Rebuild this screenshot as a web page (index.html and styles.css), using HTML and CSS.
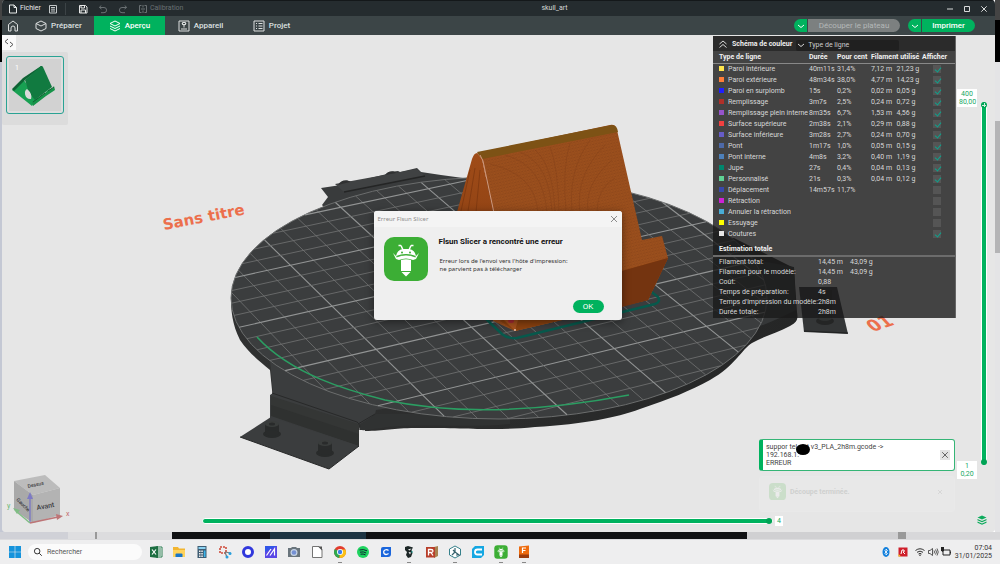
FILE: index.html
```html
<!DOCTYPE html>
<html lang="fr">
<head>
<meta charset="utf-8">
<title>skull_art</title>
<link rel="stylesheet" href="styles.css">
</head>
<body>
<div class="desktop">
<main class="window">
  <header class="titlebar">
    <button class="tool file"><svg class="ic" viewBox="0 0 10 10"><path d="M1.500 1h4.500l2.500 2.500v5.500h-7zM6 1v2.500h2.500"/></svg>Fichier</button>
    <button class="tool" aria-label="Menu"><svg class="ic" viewBox="0 0 10 10"><path d="M1.500 1.500h7v7.500h-7zM3 3.500h4M3 5.200h4M3 7h4"/></svg></button>
    <span class="sep"></span>
    <button class="tool save" aria-label="Enregistrer"><svg class="ic bright" viewBox="0 0 10 10"><path d="M1.500 1.500h6l1.500 1.500v6h-7.500zM3 1.500v2.500h3.500v-2.500M3 9v-3h4.500v3"/></svg></button>
    <button class="tool dim" aria-label="Annuler"><svg class="ic" viewBox="0 0 10 10"><path d="M3 1.500L1.500 3.500 3.500 5M1.500 3.500h4.500a2.600 2.600 0 0 1 0 5.200h-3"/></svg></button>
    <button class="tool dim" aria-label="Rétablir"><svg class="ic" viewBox="0 0 10 10"><path d="M7 1.500L8.500 3.500 6.500 5M8.500 3.500h-4.500a2.600 2.600 0 0 0 0 5.200h3"/></svg></button>
    <button class="tool dim"><svg class="ic" viewBox="0 0 10 10"><path d="M3.500 1.500h-2v7h2M6.500 1.500h2v7h-2M5 1v2.500M5 6.500v2.500M3 5h4"/></svg>Calibration</button>
    <h1 class="doc">skull_art</h1>
    <div class="wincontrols">
      <button aria-label="Réduire"><svg class="ic" viewBox="0 0 10 10"><path d="M2 5h6"/></svg></button>
      <button aria-label="Agrandir"><svg class="ic" viewBox="0 0 10 10"><path d="M2.500 2.500h5v5h-5z"/></svg></button>
      <button aria-label="Fermer"><svg class="ic" viewBox="0 0 10 10"><path d="M2.300 2.300l5.400 5.400M7.700 2.300l-5.400 5.400"/></svg></button>
    </div>
  </header>
  <nav class="tabs">
    <button class="home" aria-label="Accueil"><svg class="ic big" viewBox="0 0 12 12"><path d="M1.500 6v-1.500L6 1l4.500 3.500V11H8V8a2 2 0 0 0-4 0v3H1.500V6"/></svg></button>
    <button class="tab"><svg class="ic big" viewBox="0 0 12 12"><path d="M6 1l5 2.500v5L6 11 1 8.500v-5zM1 3.500L6 6l5-2.500"/></svg>Préparer</button>
    <button class="tab active"><svg class="ic big" viewBox="0 0 12 12"><path d="M6 1l5 2.500L6 6 1 3.500zM1 6l5 2.500L11 6M1 8.500L6 11l5-2.500"/></svg>Aperçu</button>
    <button class="tab"><svg class="ic big" viewBox="0 0 12 12"><path d="M1 1h10v10H1zM3 9h6M4 3.500l2 2 2-2M6 5.500v2M4.500 2.500h3v2h-3z"/></svg>Appareil</button>
    <button class="tab"><svg class="ic big" viewBox="0 0 12 12"><path d="M1 1h10v10H1zM3 3.500h1M3 6h1M3 8.500h1M5.500 3.500h4M5.500 6h4M5.500 8.500h4"/></svg>Projet</button>
    <div class="actions">
      <div class="split"><button class="drop" aria-label="Options de découpe"><svg class="ic" viewBox="0 0 10 10"><path d="M2 4l3 2.500L8 4"/></svg></button><button class="act off">Découper le plateau</button></div>
      <div class="split print"><button class="drop" aria-label="Options d'impression"><svg class="ic" viewBox="0 0 10 10"><path d="M2 4l3 2.500L8 4"/></svg></button><button class="act">Imprimer</button></div>
    </div>
  </nav>
  <section class="viewport">
    <svg class="scene" viewBox="2 35 993 497" preserveAspectRatio="xMidYMid slice">
      <defs>
        <pattern id="weave" width="3" height="3" patternUnits="userSpaceOnUse" patternTransform="rotate(-12)"><rect width="3" height="3" fill="#9c501d"/><path d="M0 .5h2M1.500 2h1.500" stroke="#86431a" stroke-width=".6"/></pattern>
        <linearGradient id="side" x1="0" x2="1"><stop offset="0" stop-color="#303131"/><stop offset="1" stop-color="#252626"/></linearGradient>
        <linearGradient id="front" x1="0" y1="0" x2="0" y2="1"><stop offset="0" stop-color="#a04c18"/><stop offset="1" stop-color="#7b360f"/></linearGradient>
      </defs>
      <text class="bedtext" transform="translate(164 230) rotate(-11)">Sans titre</text>
      <text class="bedtext num" transform="translate(873 332) rotate(-19) skewX(24)">01</text>
      <path d="M321 188l20-3 2-3 6-1 5 1 33-8 3-2 8-1 2 1 17-4 4 4 20 3 44 6-140 50-23-26 6-8z" fill="#393b3c"/>
      <path d="M335 184l9 8 81-16-8-7z" fill="#404243"/><path d="M344 192l81-16" stroke="#242525" stroke-width="1.500"/>
      <path d="M338 185c2-5 10-6 12-3M385 175c2-4 9-5 11-2" fill="#303132"/>
      <path d="M231 298c0 12 1 26 9 42 8 12 18 20 30 30l3 30h92l0 31c20 0 28-3 50-3 60 0 80 3 120-1 50-3 80-9 105-18 30-10 50-18 70-29 25-14 32-31 42-37 12-7 25-10 38-17 8-4 8-8 7-14l-3-44-60-30z" fill="url(#side)"/>
      <path d="M700 220l60 41 34 6 2 43c-20 10-38 18-60 24z" fill="#353738"/>
      <path d="M799 287h38l11 47-44-2z" fill="#343637"/><path d="M804 331l44 2" stroke="#202121"/>
      <ellipse cx="825" cy="321" rx="9" ry="4" fill="#242525"/><path d="M818 290h14v28h-14z" fill="#2b2c2c"/><ellipse cx="825" cy="318" rx="7" ry="3" fill="#303232"/>
      <path d="M270 360l3 33-3 2v24l89 28v-19l16-14 1-4 40-6 20-5-80-20z" fill="#3b3d3e"/>
      <path d="M271 396l88 28v10l-88-27z" fill="#343635"/>
      <path d="M271 405l88 29v12l-88-30z" fill="#2f3130"/>
      <path d="M360 424l16-10h34c20 0 30-2 40 0h60v10c-40 4-70 0-110 2-20 1-30 5-40 4z" fill="#303232"/>
      <path d="M271 417l88 29-30 23-89-32z" fill="#3b3d3e"/><path d="M240 437l89 32 30-23" fill="none" stroke="#282929"/>
      <path d="M272 393l85 29c3 2 3 4 2 8M358 424l17-10" fill="none" stroke="#282929"/>
      <g fill="#292b2b"><ellipse cx="272" cy="434" rx="9" ry="4"/><path d="M265 424h14v9h-14z"/><ellipse cx="272" cy="433" rx="7" ry="3"/><ellipse cx="272" cy="424" rx="7" ry="3" fill="#3a3d3c"/><ellipse cx="272" cy="424" rx="3" ry="1.500"/><ellipse cx="325" cy="453" rx="9" ry="4"/><path d="M318 443h14v9h-14z"/><ellipse cx="325" cy="452" rx="7" ry="3"/><ellipse cx="325" cy="443" rx="7" ry="3" fill="#3a3d3c"/><ellipse cx="325" cy="443" rx="3" ry="1.500"/></g>
      <ellipse cx="499" cy="298" rx="268" ry="121" fill="#3b3d3e" stroke="#6b6d6d" stroke-width="1"/>
      <g id="bed-grid"></g>
      <path d="M257 337C292 375 350 391 385 400 470 418 560 408 629 395" fill="none" stroke="#2b9e62" stroke-width="1.600"/>
      <path d="M484 317l18 17q6 5 15 4l138-34q6-2 3-7l-10-8" fill="none" stroke="#07594c" stroke-width="2.500"/>
      <path d="M477 153l5 6 11 52 0 110 22 10 108-25 25-6 20-42-6-22-20 4-25-110q-1-6-7-5z" fill="url(#weave)"/>
      <path d="M477 153q-3 0-5 6l-15 53 47 108 11 11-10-110-12-10-11-52z" fill="url(#front)"/>
      <path d="M477 152l135-27q5 0 6 7l-136 27z" fill="#7d5215"/>
      <g fill="none" stroke="#7d3d16" stroke-width=".7" opacity=".5"><path d="M505 155q38 10 42 57M520 152q30 12 32 60M535 150q18 15 20 62M550 147q8 20 9 65M570 143q-8 25-4 69M590 140q-22 30-18 72M605 145q-30 30-25 67M612 160q-28 24-24 52M615 178q-18 10-18 34M490 164q45 10 48 48"/></g>
      <path d="M480 155l3 6 11 52" fill="none" stroke="#d0997e" stroke-width="1"/>
      <path d="M470 170l-9 41M475 168l-7 43M480 170l-4 42" stroke="#74330e" stroke-width=".6"/>
      <path d="M622 271l46-13-20 42-133 31-15-10z" fill="#8a410f"/><path d="M622 271l46-13-20 42-26 7z" fill="#743410"/>
      <path d="M504 320l11 11 3-11z" fill="#a5501d"/><ellipse cx="511" cy="321" rx="3" ry="2" fill="#a82b35"/><circle cx="515" cy="330" r="1" fill="#e8c5b4"/>
    </svg>

    <button class="collapse" aria-label="Replier"><svg viewBox="0 0 14 14"><path d="M6 3L3 5.500 6 8M8 6l3 2.500L8 11"/></svg></button>
    <div class="plates">
      <button class="plate" aria-label="Plateau 1"><span class="no">1</span>
        <svg viewBox="0 0 58 58"><path d="M6 34L17 23 31 42 26 50z" fill="#18a052"/><path d="M6 33L17 22l18-12 2 0-18 14L8 35z" fill="#0e6334"/><path d="M19 24l16-14 2 1 9 20-17 13-6-7z" fill="#117a40"/><path d="M26 46l13-9 3-3 5-2 1-2 1 4-9 6-13 10z" fill="#169349"/><path d="M27 46l12-9M42 35l6-4" stroke="#0f5f33"/><path d="M21 33c-4 2-2 11 4 10 1-3 0-7-4-10z" fill="#dadada"/></svg>
      </button>
    </div>

    <aside class="legend">
      <div class="legend-head"><svg class="ic" viewBox="0 0 10 10"><path d="M1.500 5L5 2l3.500 3M1.500 8.500L5 5.500l3.500 3"/></svg><label for="scheme">Schéma de couleur</label>
        <span class="pick"><svg class="ic" viewBox="0 0 10 10"><path d="M2 4l3 2.500L8 4"/></svg><select id="scheme"><option>Type de ligne</option></select></span></div>
      <table class="types">
        <thead><tr><th class="c-name">Type de ligne</th><th class="c-time">Durée</th><th class="c-pct">Pour cent</th><th colspan="2">Filament utilisé</th><th class="c-show">Afficher</th></tr></thead>
        <tbody id="line-types"></tbody>
      </table>
      <h2>Estimation totale</h2>
      <table class="totals">
        <tr><th>Filament total:</th><td class="t-a">14,45 m</td><td>43,09 g</td></tr>
        <tr><th>Filament pour le modèle:</th><td>14,45 m</td><td>43,09 g</td></tr>
        <tr><th>Coût:</th><td>0,88</td><td></td></tr>
        <tr><th>Temps de préparation:</th><td>4s</td><td></td></tr>
        <tr><th>Temps d'impression du modèle:</th><td>2h8m</td><td></td></tr>
        <tr><th>Durée totale:</th><td>2h8m</td><td></td></tr>
      </table>
    </aside>

    <div class="layers">
      <output class="tag">400<br>80,00</output>
      <div class="vtrack"><input class="vrange" type="range" min="1" max="400" value="400" aria-label="Couche supérieure"><input class="vrange low" type="range" min="1" max="400" value="1" aria-label="Couche inférieure"></div>
      <output class="tag low">1<br>0,20</output>
    </div>
    <svg class="stack" viewBox="0 0 10 10"><path d="M5 .5l4.500 2L5 4.500l-4.500-2zM.5 4l4.500 2 4.500-2v1.200L5 7.200.5 5.200zM.5 6.500L5 8.500l4.500-2v1.200L5 9.800.5 7.700z" fill="#0cab5c"/></svg>
    <div class="moves"><input class="hrange" type="range" min="0" max="4" value="4" aria-label="Déplacement"><output class="tag">4</output></div>

    <svg class="cube" viewBox="0 0 66 56">
      <path d="M9 9L40 3l15 13-27 7z" fill="#bcbcbc"/><path d="M9 9l19 14v28L9 38z" fill="#a9a9a9"/><path d="M28 23l27-7v27l-27 8z" fill="#b3b3b3"/>
      <text class="facetext" transform="translate(32 38) rotate(-10)">Avant</text>
      <text class="facetext small" transform="translate(11 28) rotate(45)">Gauche</text>
      <text class="facetext small" transform="translate(23 16) rotate(-12)">Dessus</text>
      <path d="M25 51V26" stroke="#7d7ac4" stroke-width="1.400"/><path d="M22 27l3-7 3 7z" fill="#7d7ac4"/>
      <path d="M25 51l-13-11" stroke="#7fbd84" stroke-width="1.400"/><path d="M8 36l7 2-3 4z" fill="#7fbd84"/>
      <path d="M25 51l28-6" stroke="#bd7577" stroke-width="1.400"/><path d="M51 42l7 2-6 4z" fill="#bd7577"/>
      <text x="2" y="36" class="axis y">y</text><text x="61" y="44" class="axis x">x</text>
    </svg>

    <div class="toasts">
      <div class="toast"><p>suppor tel.pat v3_PLA_2h8m.gcode -&gt;<br>192.168.1.<br>ERREUR</p><span class="blot"></span><button aria-label="Fermer"><svg class="ic" viewBox="0 0 10 10"><path d="M1.500 1.500l7 7M8.500 1.500l-7 7"/></svg></button></div>
      <div class="toast faded"><svg class="logo" viewBox="0 0 44 44"><use href="#flsun"/></svg><p>Découpe terminée.</p><button aria-label="Fermer"><svg class="ic" viewBox="0 0 10 10"><path d="M2.500 2.500l5 5M7.500 2.500l-5 5"/></svg></button></div>
    </div>
  </section>

  <div class="modal">
    <section class="dialog" role="dialog" aria-labelledby="err-title">
      <header><span>Erreur Flsun Slicer</span><button aria-label="Fermer"><svg class="ic" viewBox="0 0 10 10"><path d="M2 2l6 6M8 2L2 8"/></svg></button></header>
      <div class="dialog-body">
        <svg class="logo" viewBox="0 0 44 44"><g id="flsun"><rect width="44" height="44" rx="10" fill="#3cae35"/><path d="M17 8.500l2 4.500M27 8.500l-2 4.500M14.500 8.500h2.500M27 8.500h2.500" stroke="#fff" stroke-width="1.500"/><path d="M12 19q1-6 7-7h6q6 1 7 7-10-4-20 0z" fill="#fff"/><path d="M9 16l4 4q9-4 18 0l4-4-3 6-3 1q-7-3-14 0l-3-1z" fill="#fff"/><path d="M12.500 20q9.500-4 19 0" stroke="#3cae35" stroke-width=".8" fill="none"/><path d="M17 23q5-1.500 10 0v11H17zM17.500 35h9L22 39.500z" fill="#fff"/><circle cx="18" cy="15.500" r="1" fill="#3cae35"/><circle cx="26" cy="15.500" r="1" fill="#3cae35"/></g></svg>
        <div class="msg"><h2 id="err-title">Flsun Slicer a rencontré une erreur</h2><p>Erreur lors de l'envoi vers l'hôte d'impression:<br>ne parvient pas à télécharger</p></div>
      </div>
      <footer><button class="ok">OK</button></footer>
    </section>
  </div>
</main>
</div>

<footer class="taskbar">
  <button class="app start" aria-label="Démarrer"><svg viewBox="0 0 14 14"><path d="M1 1h5.700v5.700H1zM7.300 1H13v5.700H7.300zM1 7.300h5.700V13H1zM7.300 7.300H13V13H7.300z" fill="#1593dc"/></svg></button>
  <label class="search"><svg viewBox="0 0 12 12"><circle cx="5" cy="5" r="3.300"/><path d="M7.500 7.500L10.500 10.500"/></svg><input type="text" placeholder="Rechercher" aria-label="Rechercher"></label>
  <button class="app" aria-label="Excel"><svg viewBox="0 0 14 14"><path d="M7 2h6v10H7z" fill="#fff" stroke="#2b7d50"/><path d="M8 4h4M8 6h4M8 8h4M8 10h4" stroke="#2b7d50"/><path d="M1 2l8-1v12l-8-1z" fill="#1d6f42"/><path d="M3 4.500l4 5M7 4.500l-4 5" stroke="#fff" stroke-width="1.200"/></svg></button>
  <button class="app" aria-label="Explorateur"><svg viewBox="0 0 14 14"><path d="M1 2h5l1 1.500h6V12H1z" fill="#f2b530"/><path d="M1 5h12v7H1z" fill="#ffd35c"/><path d="M3.500 12V9.500q0-1 1-1h5q1 0 1 1V12z" fill="#1976c9"/></svg></button>
  <button class="app" aria-label="Calculatrice"><svg viewBox="0 0 14 14"><rect x="2.500" y="1" width="9" height="12" fill="#3e5c73"/><path d="M3.500 2h7v2h-7z" fill="#8bd2f2"/><path d="M4 5.500h1.500V7H4zM6.300 5.500h1.500V7H6.300zM4 8h1.500v1.500H4zM6.300 8h1.500v1.500H6.300zM4 10.500h1.500V12H4zM6.300 10.500h1.500V12H6.300z" fill="#eee"/><path d="M8.800 5.500h1.700V12H8.800z" fill="#3bb4ea"/></svg></button>
  <button class="app" aria-label="Capture"><svg viewBox="0 0 14 14"><path d="M2 2h6v6H2z" fill="none" stroke="#cf4b3b" stroke-width="1.600" stroke-dasharray="2 1"/><path d="M7 7l5.500 1M7 7l2 5.500" stroke="#777" stroke-width="1.200"/><circle cx="12" cy="8.500" r="1.500" fill="#28a0de"/><circle cx="9" cy="12" r="1.500" fill="#28a0de"/></svg></button>
  <button class="app" aria-label="Anneau"><svg viewBox="0 0 14 14"><circle cx="7" cy="7" r="4.500" fill="#fff" stroke="#3138dc" stroke-width="3"/></svg></button>
  <button class="app" aria-label="Support"><svg viewBox="0 0 14 14"><path d="M1 1h12v12H1z" fill="#3155e8"/><path d="M1 13V7l12-6v12z" fill="#5a48e6"/><path d="M2.500 10.500L7 4M6 10.500L10.500 4v6.500" stroke="#fff" stroke-width="1.200" fill="none"/></svg></button>
  <button class="app" aria-label="Caméra"><svg viewBox="0 0 14 14"><path d="M1 3h3l1-1h4l1 1h3v9H1z" fill="#69747c"/><circle cx="7" cy="7.500" r="3.500" fill="#c6d4e6"/><circle cx="7" cy="7.500" r="2.300" fill="#7490d4"/></svg></button>
  <button class="app" aria-label="Document"><svg viewBox="0 0 14 14"><path d="M2.500 1.500h6.500l3 3V12.500H2.500z" fill="#fff" stroke="#747474"/><path d="M8 1.500L12 5.500V1.500z" fill="#555"/></svg></button>
  <button class="app run" aria-label="Chrome"><svg viewBox="0 0 14 14"><circle cx="7" cy="7" r="6" fill="#e33b2e"/><path d="M7 7L1.800 4A6 6 0 0 0 6.500 13z" fill="#2da94f"/><path d="M7 7L6.500 13A6 6 0 0 0 12.500 4.500H7z" fill="#fbc116"/><circle cx="7" cy="7" r="3" fill="#fff"/><circle cx="7" cy="7" r="2.200" fill="#3f7de8"/></svg></button>
  <button class="app" aria-label="Spotify"><svg viewBox="0 0 14 14"><circle cx="7" cy="7" r="6" fill="#1ed35f"/><path d="M3.500 5q4-1.200 7.500.8M4 7.200q3.500-1 6.200.8M4.500 9.200q2.700-.7 5 .7" stroke="#123" fill="none"/></svg></button>
  <button class="app" aria-label="Creality"><svg viewBox="0 0 14 14"><path d="M4 2h8v7q0 3-3 3H2V4q0-2 2-2z" fill="#1b66dc"/><path d="M9.500 5.500Q8 4 6 5T5 8.500q2 2 4.500 0" stroke="#fff" stroke-width="1.200" fill="none"/></svg></button>
  <button class="app run" aria-label="Orca"><svg viewBox="0 0 14 14"><path d="M3 2l3-1 5 1.500L9.500 5l1 3L9 12l-3 1-2-3 1-3-2-2z" fill="#1c2626"/><path d="M6 4.500l3.500-1-2 2zM6.500 7l2.500.5-1 2z" fill="#fff"/><path d="M9.500 5.500l1.500 1.500-1.500 1z" fill="#15a69a"/></svg></button>
  <button class="app" aria-label="R"><svg viewBox="0 0 14 14"><path d="M9 2l4-1v10l-4 2z" fill="#a78250"/><path d="M1 2h9v10.500H1z" fill="#b83e2a"/><path d="M3.500 10.500V4.500H6q2 0 2 1.500t-2 1.500H3.500M6 7.500l2 3" stroke="#fff" stroke-width="1.300" fill="none"/></svg></button>
  <button class="app run" aria-label="Hexa"><svg viewBox="0 0 14 14"><path d="M7 1l5.500 3v6L7 13l-5.500-3V4z" fill="#fff" stroke="#37818c"/><path d="M7 3v4l4 3H8M7 7l-3 3M5 5l2 2" stroke="#37616c" stroke-width="1.200" fill="none"/></svg></button>
  <button class="app" aria-label="Cura"><svg viewBox="0 0 14 14"><path d="M4 1h9v9l-3 3H1V4z" fill="#15a7e2"/><path d="M11 4.500H6.500Q4 4.500 4 7t2.500 2.500H11" stroke="#fff" stroke-width="1.800" fill="none"/></svg></button>
  <button class="app run" aria-label="Flsun Slicer"><svg viewBox="-1 -1 46 46"><use href="#flsun"/></svg></button>
  <button class="app run" aria-label="Fusion"><svg viewBox="0 0 14 14"><path d="M2 1.500l10-1V13H2z" fill="#ee6b0e"/><path d="M2 9.500h10V13H2z" fill="#9c3c0c"/><path d="M5.500 8V3H9M5.500 5.500h3" stroke="#fff" stroke-width="1.200" fill="none"/></svg></button>
  <div class="tray">
    <svg viewBox="0 0 12 12"><ellipse cx="6" cy="6" rx="3.500" ry="5" fill="#1581dc"/><path d="M4.500 4.500l3 3L6 9V3l1.500 1.500-3 3" stroke="#fff" stroke-width=".8" fill="none"/></svg>
    <svg class="pdf" viewBox="0 0 12 12"><path d="M1.500 1.500h9v9h-9z" fill="#cf1f2b"/><path d="M4 8l1-4h2q1 2-1 2l2 2" stroke="#fff" fill="none"/><path d="M1.500 8L4 10.500H1.500z" fill="#f6d22c"/></svg>
    <svg viewBox="0 0 12 12"><path d="M1.500 4.500q4.500-3.500 9 0M3 6.300q3-2.300 6 0M4.500 8q1.500-1.200 3 0" stroke="#333" fill="none"/><circle cx="6" cy="9.300" r=".8" fill="#333"/></svg>
    <svg viewBox="0 0 12 12"><path d="M1.500 4.500H3L5.500 2.500v7L3 7.500H1.500zM7 4.500q1 1.500 0 3M8.500 3.500q2 2.500 0 5M10 2.500q2.500 3.500 0 7" stroke="#333" stroke-width=".8" fill="none"/></svg>
    <svg viewBox="0 0 12 12"><path d="M3 4h7v5H3zM10.500 5.500v2" stroke="#222" fill="none"/><path d="M1 1h3v3.500L2.500 6 1 4.500z" fill="#222"/></svg>
    <time>07:04<br>31/01/2025</time>
  </div>
</footer>
<script src="app.js"></script>
</body>
</html>
```
FILE: styles.css
```css
* { box-sizing: border-box; }
body { margin: 0; height: 100vh; display: flex; flex-direction: column; overflow: hidden; font: 7px/11px Roboto, "Noto Sans", sans-serif; color: #333; }
button, input, select { font: inherit; color: inherit; margin: 0; padding: 0; border: 0; background: none; }
button { display: inline-flex; align-items: center; justify-content: center; }
h1, h2, p { margin: 0; }
svg { display: block; flex: none; }
.ic { width: 10px; height: 10px; fill: none; stroke: currentColor; stroke-width: 1; }
.ic.big { width: 12px; height: 12px; stroke-width: 1; }

.desktop { flex: 1; min-height: 0; display: flex; padding: 0 5px 7px 2px;
  background:
    linear-gradient(90deg, #d0d1d7 68px, #dedee0 68px 95px, #999 95px 97px, #dcdcde 97px 172px, #101113 172px 270px, #1d3442 270px 366px, #101113 366px 747px, #d0d0d2 747px 898px, #999 898px 906px, #d8d8da 906px) bottom / 100% 7px no-repeat,
    linear-gradient(#444 20px, #000 20px 62px, #e4e4e6 62px 121px, #b4b4b6 121px 253px, #e4e4e6 253px) right / 5px 100% no-repeat,
    linear-gradient(#444 20px, #000 20px 62px, #c4c8d4 62px) left / 10px 100% no-repeat; }
.window { position: relative; flex: 1; min-width: 0; display: flex; flex-direction: column; border-radius: 4px; overflow: hidden; background: #e6e6e6; }

.titlebar { position: relative; height: 16px; display: flex; align-items: center; gap: 10px; padding: 0 6px 0 6px; background: #252c2f; color: #c4c8ca; border-top: 1px solid #14181a; }
.tool { gap: 2px; height: 14px; }
.tool.file { color: #e8eaea; margin-right: -3px; }
.tool.dim { color: #6a7073; }
.tool .bright { color: #e8e8e8; }
.sep { width: 1px; height: 12px; background: #3c4346; margin: 0 2px 0 -3px; }
.doc { position: absolute; inset: 0; display: grid; place-items: center; padding-left: 112px; font: inherit; color: #d6d8d8; pointer-events: none; }
.wincontrols { margin-left: auto; display: flex; gap: 7px; color: #d8dada; }

.tabs { height: 19px; display: flex; align-items: stretch; background: #3c4547; color: #dde0e0; font: 500 8px/12px Roboto, "Noto Sans", sans-serif; }
.home { width: 21px; }
.tab { width: 71px; gap: 4px; }
.tab.active { background: #00b25e; color: #fff; }
.actions { margin-left: auto; display: flex; align-items: center; gap: 8px; padding-right: 20px; }
.split { display: flex; gap: 1px; height: 13px; border-radius: 7px; overflow: hidden; }
.drop { width: 13px; background: #00b25e; color: #fff; }
.act { width: 92px; background: #00b25e; color: #fff; }
.act.off { background: #7c8080; color: #b4b8b8; font-weight: 400; }
.print .act { width: 53px; }

.viewport { position: relative; flex: 1; min-height: 0; background: #e6e6e6; }
.scene { position: absolute; inset: 0; width: 100%; height: 100%; }
.bedtext { font: bold 15px "DejaVu Sans", sans-serif; fill: #ec6f4c; }
.bedtext.num { font-size: 17px; }
.minor { stroke: #727474; stroke-width: .8; }
.major { stroke: #929494; stroke-width: 1.1; }

.collapse { position: absolute; left: 0; top: 0; width: 14px; height: 15px; background: #fafafa; }
.collapse svg { width: 14px; height: 14px; fill: none; stroke: #555; }
.plates { position: absolute; left: 0; top: 17px; padding: 4px; height: 73px; background: #dcdcdc; border-radius: 2px; }
.plate { position: relative; width: 58px; height: 58px; border: 1px solid #2aa394; border-radius: 3px; background: #d2d2d2; overflow: hidden; box-shadow: inset 0 0 0 2px #dedede; }
.plate svg { width: 58px; height: 58px; }
.no { position: absolute; left: 8px; top: 6px; color: #fff; }

.legend { position: absolute; right: 39px; top: 1px; width: 243px; padding-bottom: 1px; background: rgba(26, 26, 26, .8); color: #d8d8d8; line-height: 10px; border-right: 1px solid #666; }
.legend-head { display: flex; align-items: center; gap: 4px; height: 15px; padding-left: 5px; background: #2b2b2b; }
.legend-head label { font-weight: bold; color: #eee; }
.pick { display: flex; align-items: center; width: 103px; height: 11px; margin: 3px 0 0 0; background: #202020; border-radius: 2px; }
.pick select { appearance: none; flex: 1; line-height: 10px; color: #ccc; margin-left: 2px; }
.legend table { width: 100%; border-collapse: collapse; table-layout: fixed; }
.legend th, .legend td { padding: 0; text-align: left; white-space: nowrap; }
.types thead th { height: 12px; color: #f0f0f0; border-bottom: 1px solid #888; }
.c-name { width: 96px; }
.types th:first-child, .types td:first-child { padding-left: 6px; }
.c-time { width: 28px; }
.c-pct { width: 34px; }
.c-show { width: 33px; }
.types td { height: 11px; }
.sw { display: inline-block; width: 5px; height: 5px; margin-right: 4px; vertical-align: 0; }
.types input { appearance: none; display: block; position: relative; width: 8px; height: 8px; margin-left: 11px; background: #555; }
.types input:checked::before { content: ""; position: absolute; left: 3px; top: 1px; width: 3px; height: 5px; border: solid #0fa18b; border-width: 0 1px 1px 0; transform: rotate(40deg); }
.legend h2 { font: bold 7px/10px Roboto, sans-serif; color: #f0f0f0; padding: 5px 0 1px 6px; border-bottom: 2px solid #6c6c6c; }
.totals th { width: 105px; font-weight: normal; padding-left: 6px !important; }
.totals tr { height: 10px; }
.totals td.t-a { width: 32px; }

.tag { display: block; padding: 1px 2px; background: #fff; color: #16a863; text-align: center; line-height: 8px; }
.layers { position: absolute; right: 5px; top: 54px; bottom: 53px; display: grid; grid-template-columns: 20px 10px; column-gap: 3px; grid-template-rows: auto 1fr auto; }
.vtrack { grid-column: 2; grid-row: 1 / 4; display: grid; margin: 13px 0 14px; }
.layers .tag { grid-column: 1; grid-row: 1; }
.layers .tag.low { grid-row: 3; }
.vrange { grid-area: 1 / 1; appearance: none; writing-mode: vertical-lr; direction: rtl; width: 8px; height: 100%; }
.vrange::-webkit-slider-runnable-track { width: 6px; background: #00b25e; border: solid #fff; border-width: 0 1px; border-radius: 3px; }
.vrange.low { pointer-events: none; }
.vrange.low::-webkit-slider-runnable-track { background: none; border-color: transparent; }
.vrange::-webkit-slider-thumb { appearance: none; width: 6px; height: 6px; margin-left: -1px; border-radius: 50%; background: linear-gradient(#cfeedd, #cfeedd) center / 4px 1px no-repeat, linear-gradient(#cfeedd, #cfeedd) center / 1px 4px no-repeat, #00a355; }
.vrange.low::-webkit-slider-thumb { background: #00a355; }
.stack { position: absolute; right: 8px; bottom: 7px; width: 10px; height: 10px; }
.moves { position: absolute; left: 200px; right: 212px; bottom: 6px; display: flex; align-items: center; gap: 2px; }
.hrange { flex: 1; min-width: 0; appearance: none; height: 8px; }
.hrange::-webkit-slider-runnable-track { height: 6px; background: #00b25e; border: solid #fff; border-width: 1px; border-radius: 3px; }
.hrange::-webkit-slider-thumb { appearance: none; width: 6px; height: 6px; margin-top: -1px; border-radius: 50%; background: #00a355; }

.cube { position: absolute; left: 3px; bottom: 4px; width: 66px; height: 56px; }
.facetext { font: 500 7px Roboto, sans-serif; fill: #3c3c42; }
.facetext.small { font-size: 5px; }
.axis { font: 7px Roboto, sans-serif; }
.axis.x { fill: #c46a6c; }
.axis.y { fill: #6cb872; }

.toasts { position: absolute; right: 40px; bottom: 20px; width: 196px; display: grid; gap: 5px; }
.toast { position: relative; display: flex; align-items: center; justify-content: space-between; min-height: 32px; padding: 0 4px 0 3px; background: #fff; border: 1px solid #35b576; border-left: 4px solid #00b25e; border-radius: 3px; line-height: 8px; color: #444; }
.toast > button { width: 10px; height: 10px; background: #e2e2e2; color: #444; }
.toast > button .ic { width: 8px; height: 8px; }
.blot { position: absolute; left: 33px; top: 4px; width: 14px; height: 11px; border-radius: 50%; background: #000; }
.toast.faded { min-height: 36px; gap: 4px; padding: 0 9px; border: 1px solid #e9e9e9; background: #e8e8e8; color: #cfd0cf; font-weight: bold; padding-bottom: 5px; }
.toast.faded p { flex: 1; }
.toast.faded .logo { width: 17px; height: 17px; opacity: .16; }
.toast.faded > button { background: none; color: #d2d2d2; }

.modal { position: absolute; inset: 0; display: grid; place-content: center; padding: 0 2px 1px 0; }
.dialog { width: 248px; background: #efefef; border-radius: 3px; box-shadow: 0 2px 8px rgba(0, 0, 0, .45); overflow: hidden; }
.dialog header { display: flex; align-items: center; justify-content: space-between; height: 16px; padding: 0 3px 0 4px; background: #f4f4f4; color: #8c8c8c; font: 6px/10px "Noto Sans", sans-serif; }
.dialog-body { display: flex; gap: 11px; padding: 10px 10px 0; }
.dialog .logo { width: 44px; height: 44px; }
.msg h2 { font: bold 8px/10px Roboto, sans-serif; color: #111; }
.msg p { margin: 10px 0 0 1px; font: 6px/8px "Noto Sans", sans-serif; color: #333; }
.dialog footer { display: flex; justify-content: flex-end; padding: 19px 18px 7px; }
.ok { width: 31px; height: 13px; border-radius: 7px; background: #00b25e; color: #fff; font-size: 8px; }

.taskbar { height: 25px; display: flex; align-items: center; background: #eeeeef; padding-left: 3px; border-top: 1px solid #dcdcde; }
.app { position: relative; width: 23px; height: 24px; flex: none; }
.app svg { width: 14px; height: 14px; }
.run::after { content: ""; position: absolute; bottom: 1px; width: 4px; height: 1px; background: #888; }
.search { display: flex; align-items: center; gap: 4px; width: 114px; height: 16px; margin: 0 2px; padding: 0 5px; background: #fbfbfb; border-radius: 8px; }
.search svg { width: 10px; height: 10px; fill: none; stroke: #333; stroke-width: 1.2; }
.search input { min-width: 0; flex: 1; font-size: 7px; outline: 0; }
.search input::placeholder { color: #555; opacity: 1; }
.tray { margin-left: auto; display: flex; align-items: center; gap: 1px; padding-right: 8px; color: #333; }
.tray svg { width: 12px; height: 12px; }
.tray svg:first-child { margin-left: 5px; }
.tray .pdf { margin: 0 4px; }
.tray time { text-align: right; line-height: 8px; margin-left: 2px; }
```
FILE: app.js
```js
// Build plate grid: heavy lines every 50 mm from the corner, three light lines between them.
const grid = document.getElementById('bed-grid');
const angle = 27 * Math.PI / 180;
const depth = 0.075;

function project(u, v) {
  const x = u * Math.cos(angle) + v * Math.sin(angle);
  const z = u * Math.sin(angle) - v * Math.cos(angle);
  const w = 1 + depth * z;
  return [499 + 267 * x / w, 289 - 120 * z / w];
}

function addLine(from, to, major) {
  const line = document.createElementNS('http://www.w3.org/2000/svg', 'line');
  line.setAttribute('x1', from[0]);
  line.setAttribute('y1', from[1]);
  line.setAttribute('x2', to[0]);
  line.setAttribute('y2', to[1]);
  line.setAttribute('class', major ? 'major' : 'minor');
  grid.appendChild(line);
}

for (let i = 1; i < 21; i++) {
  const d = (i * 12.5 - 130) / 130;
  const half = Math.sqrt(1 - d * d);
  addLine(project(d, -half), project(d, half), i % 4 === 0);
  addLine(project(-half, -d), project(half, -d), i % 4 === 0);
}

const types = [
  ['#ffe64d', 'Paroi intérieure', '40m11s', '31,4%', '7,12 m', '21,23 g', true],
  ['#ff7d38', 'Paroi extérieure', '48m34s', '38,0%', '4,77 m', '14,23 g', true],
  ['#1f1fff', 'Paroi en surplomb', '15s', '0,2%', '0,02 m', '0,05 g', true],
  ['#b03029', 'Remplissage', '3m7s', '2,5%', '0,24 m', '0,72 g', true],
  ['#9654cc', 'Remplissage plein interne', '8m35s', '6,7%', '1,53 m', '4,56 g', true],
  ['#f04040', 'Surface supérieure', '2m38s', '2,1%', '0,29 m', '0,88 g', true],
  ['#665cc7', 'Surface inférieure', '3m28s', '2,7%', '0,24 m', '0,70 g', true],
  ['#4d69a8', 'Pont', '1m17s', '1,0%', '0,05 m', '0,15 g', true],
  ['#4d80ba', 'Pont interne', '4m8s', '3,2%', '0,40 m', '1,19 g', true],
  ['#00876e', 'Jupe', '27s', '0,4%', '0,04 m', '0,13 g', true],
  ['#5ed194', 'Personnalisé', '21s', '0,3%', '0,04 m', '0,12 g', true],
  ['#3848ab', 'Déplacement', '14m57s', '11,7%', '', '', false],
  ['#cd22d6', 'Rétraction', '', '', '', '', false],
  ['#49add6', 'Annuler la rétraction', '', '', '', '', false],
  ['#ffff00', 'Essuyage', '', '', '', '', false],
  ['#e6e6e6', 'Coutures', '', '', '', '', true]
];
document.getElementById('line-types').innerHTML = types.map(([color, name, ...rest]) => {
  const shown = rest.pop();
  return `<tr><td><span class="sw" style="background:${color}"></span>${name}</td>` +
    rest.map(t => `<td>${t}</td>`).join('') +
    `<td><input type="checkbox" aria-label="Afficher ${name}"${shown ? ' checked' : ''}></td></tr>`;
}).join('');
```
